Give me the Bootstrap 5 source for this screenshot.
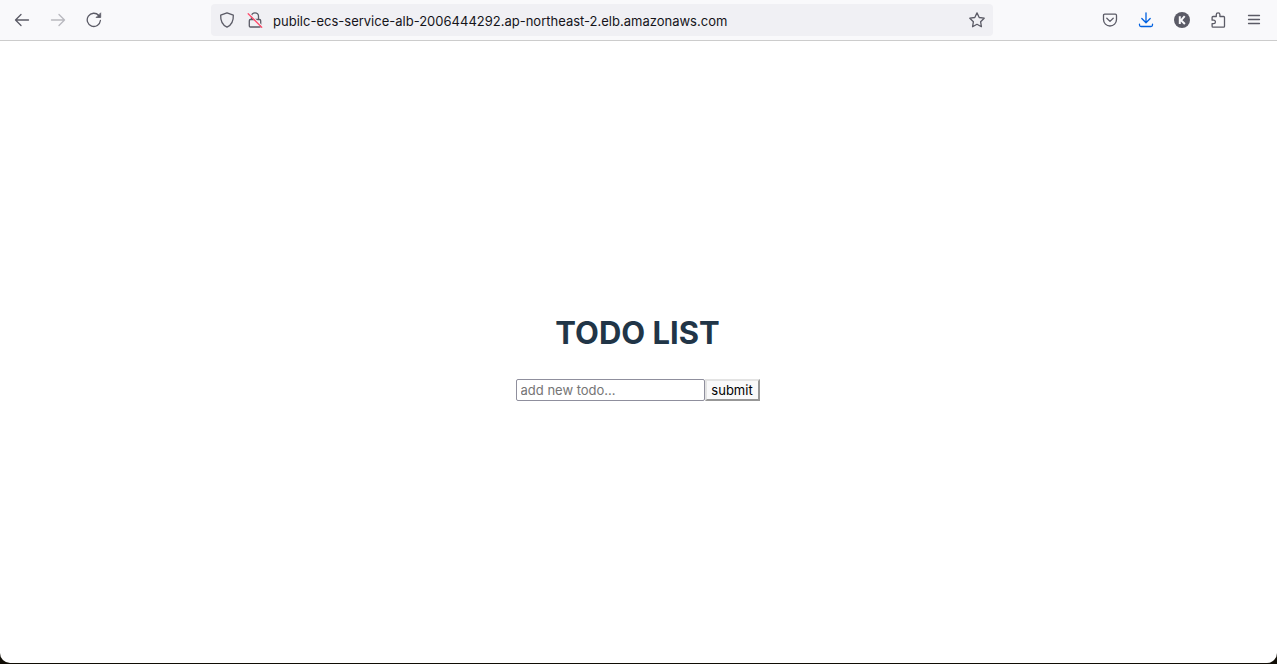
<!DOCTYPE html>
<html lang="en">
<head>
<meta charset="utf-8">
<meta name="viewport" content="width=device-width, initial-scale=1">
<title>Todo List</title>
<link href="https://cdn.jsdelivr.net/npm/bootstrap@5.3.0/dist/css/bootstrap.min.css" rel="stylesheet">
<style>
  body { background: #100d05; font-family: Inter, "Liberation Sans", sans-serif; }
  .window { min-height: calc(100vh - 1px); background: #fff; border-radius: 0 0 10px 10px; overflow: hidden; }
  .toolbar { background: #f9f9fb; border-bottom: 1px solid #ccc; padding: 4px 7px 4px 6px; }
  .tool { width: 32px; height: 32px; padding: 0; border: 0; border-radius: 4px; color: #5b5b66; }
  .tool:disabled { border: 0; color: #5b5b66; opacity: .4; }
  .tool svg { display: block; width: 16px; height: 16px; margin: auto; fill: none; stroke: currentColor; stroke-width: 1.3; stroke-linecap: round; stroke-linejoin: round; }
  .tool.download { color: #0061e0; }
  .address-wrap { padding: 0 8%; }
  .address { height: 32px; padding: 0 2px; background: #f0f0f4; border-radius: 4px; }
  .address .tool { width: 28px; }
  .address .tool + .tool { margin-right: 4px; }
  .address input { min-width: 0; height: 32px; border: 0; padding: 2px 0 0; outline: 0; background: transparent; color: #15141a; font-size: 13px; }
  main { padding-right: 2px; }
  h1 { color: #213547; font-size: 31px; line-height: 60px; font-weight: 700; }
  .todo-input, .submit-button { height: 22px; font-size: 13px; line-height: 16px; color: #000; }
  .todo-input { width: 189px; padding: 1px 4px; border: 1px solid #8f8f9d; border-radius: 2px; }
  .todo-input::placeholder { color: #757575; }
  .submit-button { width: 55px; padding: 0; border: 2px solid; border-color: #e3e3e3 #979797 #979797 #e3e3e3; background: #f9f9fa; }
</style>
</head>
<body>
<div class="window d-flex flex-column">
  <header class="toolbar d-flex align-items-center">
    <nav class="d-flex gap-1" aria-label="Navigation">
      <button type="button" class="btn tool" aria-label="Back"><svg viewBox="0 0 16 16"><path d="M14.5 8H1.5M7 2.5 1.5 8 7 13.5"/></svg></button>
      <button type="button" class="btn tool" aria-label="Forward" disabled><svg viewBox="0 0 16 16"><path d="M1.5 8h13M9 2.5 14.5 8 9 13.5"/></svg></button>
      <button type="button" class="btn tool" aria-label="Reload"><svg viewBox="0 0 16 16"><path d="M14.4 8.5A6.6 6.6 0 1 1 12.8 3.5"/><path d="M14.7 1.2v4.3h-4.3z" fill="currentColor" stroke-width=".8"/></svg></button>
    </nav>
    <div class="address-wrap flex-fill">
      <div class="address d-flex align-items-center">
        <button type="button" class="btn tool" aria-label="Tracking protection"><svg viewBox="0 0 16 16"><path d="M8 .8 14.3 3.2c.3 5.2-1.3 9.5-6.3 12C3 12.7 1.4 8.4 1.7 3.2z"/></svg></button>
        <button type="button" class="btn tool" aria-label="Connection not secure"><svg viewBox="0 0 16 16"><path d="M4.5 7.500V4.300a3.500 3.500 0 0 1 7 0v3.200M3.500 7.500h9q1.200 0 1.200 1.200v5.100q0 1.200-1.200 1.200h-9q-1.200 0-1.200-1.200V8.700q0-1.200 1.200-1.200z"/><path d="M2.200 1.300 15.200 14.300" style="stroke:#f0f0f4"/><path d="M1.200 1.700 14.700 15.200" style="stroke:#ff4f6e"/></svg></button>
        <input class="flex-fill" type="text" aria-label="Address" value="pubilc-ecs-service-alb-2006444292.ap-northeast-2.elb.amazonaws.com">
        <button type="button" class="btn tool" aria-label="Bookmark this page"><svg viewBox="0 0 16 16"><path d="m8 .9 2.200 4.600 5 .7-3.600 3.500.8 5L8 12.300l-4.400 2.400.8-5L.8 6.200l5-.7z"/></svg></button>
      </div>
    </div>
    <div class="d-flex gap-1">
      <button type="button" class="btn tool" aria-label="Save to Pocket"><svg viewBox="0 0 16 16"><path d="M2.700 2.200h10.600q1.200 0 1.200 1.200v4.100a6.500 6.500 0 0 1-13 0V3.400q0-1.200 1.200-1.200zM4.800 6.300 8 9.400l3.200-3.100"/></svg></button>
      <button type="button" class="btn tool download" aria-label="Downloads"><svg viewBox="0 0 16 16"><path d="M8 .8v9.700M3.800 6.500 8 10.700l4.200-4.200M1.500 12.200v.8q0 1.500 1.500 1.500h10q1.500 0 1.500-1.500v-.8"/></svg></button>
      <button type="button" class="btn tool" aria-label="Account K"><svg viewBox="0 0 16 16"><circle cx="8" cy="8" r="8" fill="currentColor" stroke="none"/><path d="M5.800 4.200v7.800M10.700 4.200 7 8.300l3.900 3.700" style="stroke:#f9f9fb;stroke-width:2;stroke-linecap:butt"/></svg></button>
      <button type="button" class="btn tool" aria-label="Extensions"><svg viewBox="0 0 16 16"><path d="M3 4.500h3.300V2.600a1.800 1.800 0 0 1 3.600 0v1.900h3.700q.9 0 .9.900v8.900q0 .9-.9.900H3q-.9 0-.9-.9v-2.700h1.600a1.700 1.700 0 0 0 0-3.400H2.100V5.400q0-.9.900-.9z"/></svg></button>
      <button type="button" class="btn tool" aria-label="Menu"><svg viewBox="0 0 16 16"><path d="M2.500 3.500h11M2.500 7.500h11M2.500 11.500h11"/></svg></button>
    </div>
  </header>
  <main class="flex-fill d-flex flex-column align-items-center justify-content-center">
    <h1 class="mb-3">TODO LIST</h1>
    <form class="d-flex">
      <input class="todo-input" type="text" aria-label="New todo" placeholder="add new todo...">
      <button class="submit-button" type="button">submit</button>
    </form>
  </main>
</div>
<script src="https://cdn.jsdelivr.net/npm/bootstrap@5.3.0/dist/js/bootstrap.bundle.min.js"></script>
</body>
</html>
